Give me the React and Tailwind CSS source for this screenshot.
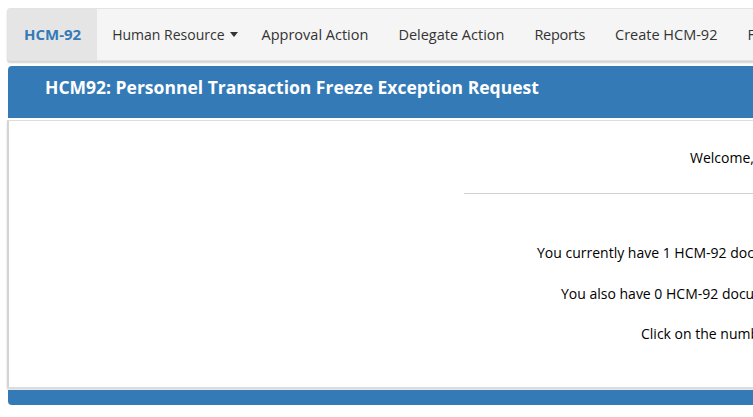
export default function App() {
  const navItems = [
    { label: 'Approval Action', cls: '' },
    { label: 'Delegate Action', cls: '' },
    { label: 'Reports', cls: 'tracking-[-0.3px]' },
    { label: 'Create HCM-92', cls: '' },
    { label: 'Find HCM-92', cls: '' },
  ];

  return (
    <div className="w-[753px] h-[417px] overflow-hidden bg-white font-['Open_Sans',sans-serif]">
      <div className="w-[1400px] pl-[7px] pt-[8px]">
        {/* navbar */}
        <nav className="flex items-stretch h-[53px] bg-[#f5f5f5] border border-[#e3e3e3] rounded-[3px] shadow-[0_2px_2px_rgba(0,0,0,0.18)]">
          <a className="flex items-center px-[16px] bg-[#e5e5e5] text-[#337ab7] font-bold text-[15px]">HCM-92</a>
          <a className="flex items-center ml-[15px] mr-[-6px] text-[#333] text-[14px]">
            Human Resource
            <span className="ml-[5px] inline-block w-0 h-0 border-l-[4.5px] border-r-[4.5px] border-t-[5px] border-l-transparent border-r-transparent border-t-[#333]" />
          </a>
          {navItems.map((item) => (
            <a key={item.label} className={`flex items-center ml-[30px] text-[#333] text-[14.5px] ${item.cls}`}>{item.label}</a>
          ))}
        </nav>

        {/* heading */}
        <div className="mt-[5px] ml-px h-[52px] bg-[#337ab7] rounded-t-[4px] flex items-center pl-[37px] pb-[10px]">
          <h1 className="text-white font-bold text-[17.5px]">HCM92: Personnel Transaction Freeze Exception Request</h1>
        </div>

        {/* panel */}
        <div className="mt-[2px] h-[268px] bg-white border border-[#ddd] border-l-[2px] border-l-[#d4d4d4] shadow-[0_2px_2px_rgba(0,0,0,0.15)]">
          <div className="pt-[26px] pl-[681px] text-[14px] text-black flex items-center">
            Welcome,
            <span className="inline-block w-[2px] h-[20px] bg-black" />
          </div>
          <hr className="mt-[25px] ml-[455px] w-[900px] border-t border-[#d0d0d0]" />
          <p className="mt-[48px] pl-[528px] text-[14px] text-black">You currently have 1 HCM-92 document(s) pending your approval.</p>
          <p className="mt-[20px] pl-[552px] text-[14px] text-black">You also have 0 HCM-92 document(s) delegated to you.</p>
          <p className="mt-[19px] pl-[632px] text-[14px] text-black">Click on the number to view the documents.</p>
        </div>

        <div className="mt-[2px] ml-px h-[15px] bg-[#337ab7] rounded-b-[4px]" />
      </div>
    </div>
  );
}
